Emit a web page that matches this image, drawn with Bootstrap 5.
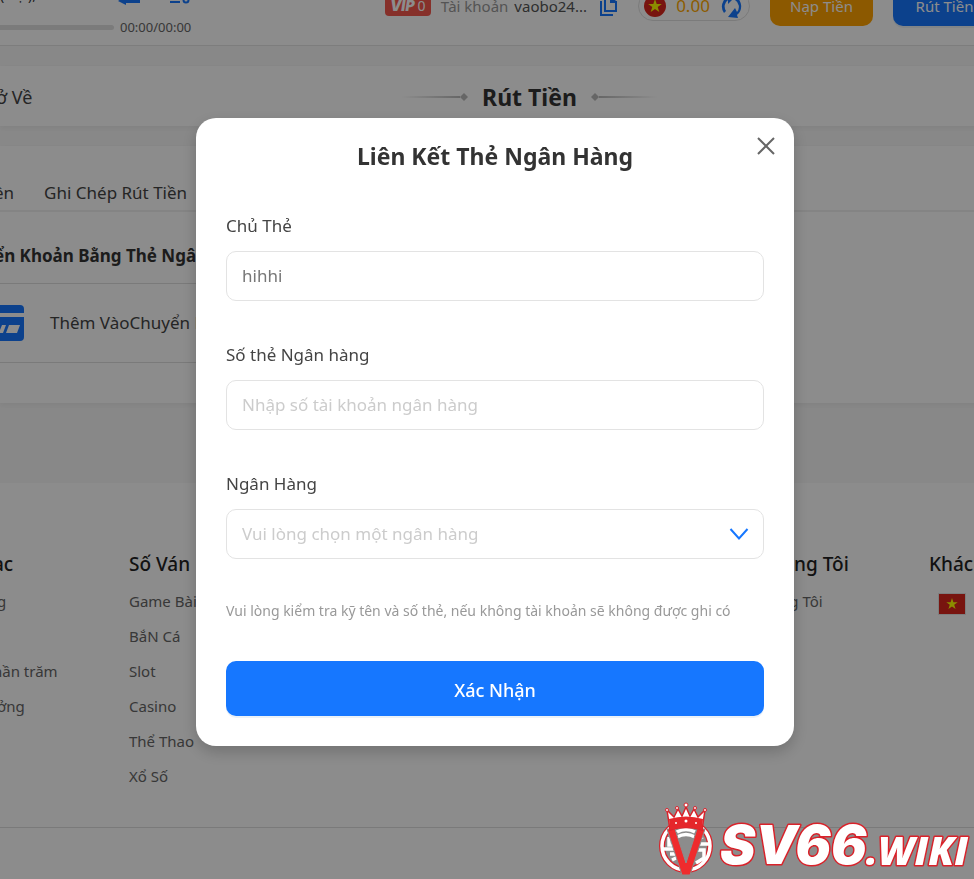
<!DOCTYPE html>
<html lang="vi">
<head>
<meta charset="utf-8">
<meta name="viewport" content="width=device-width, initial-scale=1">
<title>Rút Tiền</title>
<link href="https://cdn.jsdelivr.net/npm/bootstrap@5.3.0/dist/css/bootstrap.min.css" rel="stylesheet">
<style>
  body { font-family: "Noto Sans", "Open Sans", sans-serif; font-size: 17px; color: #333; background: #f8f8f8; overflow: hidden; }
  a { color: inherit; text-decoration: none; }
  .site { min-height: calc(100vh + 33px); margin: -33px -85px 0 0; white-space: nowrap; }
  .site-header { height: 79px; background: #fff; border-bottom: 1px solid #e4e4e4; padding-right: 63px; }
  .player { padding-top: 18px; font-size: 13px; line-height: 20px; color: #666; }
  .player-title { color: #333; font-size: 14px; gap: 40px; }
  .player-title span { width: 78px; }
  .player-track { width: 114px; height: 5px; background: #e0e0e0; border-radius: 0 4px 4px 0; margin-right: 6px; }
  .player-time { line-height: 24px; margin-top: 10px; }
  .tools { font-size: 15px; }
  .vip-tag { width: 46px; height: 20px; margin-right: 10px; border-radius: 4px; background: #f5584d; color: #fff; font: italic 900 14px/20px Inter, sans-serif; }
  .vip-tag span { font: 400 14px/20px "Noto Sans", sans-serif; }
  .user-label { color: #999; margin-right: 6px; }
  .user-name { margin-right: 13px; color: #555; }
  .wallet { width: 112px; height: 30px; margin: 0 20px; padding: 0 5px; border: 1px solid #e0e0e0; border-radius: 15px; color: #ffa800; font-size: 17px; }
  .cash-btn { width: 103px; height: 40px; border-radius: 10px; padding: 0; color: #fff; font-size: 15px; }
  .cash-in { background: #ffa200; margin-right: 20px; }
  .cash-out, .confirm-btn { background: #1677ff; box-shadow: 0 2px 0 rgba(5,90,160,.08); }
  .panel { background: #fff; box-shadow: 0 2px 6px rgba(0,0,0,.06); margin-top: 20px; }
  .title-bar { height: 60px; display: grid; grid-template-columns: 1fr auto 1fr; align-items: center; padding-top: 2px; }
  .title-bar > a { margin-left: -4px; font-size: 18px; }
  .title-bar h1 { font-size: 23px; line-height: 32px; font-weight: 700; margin: 0 14px; }
  .tabs-row { height: 66px; padding-top: 34px; border-bottom: 2px solid #f0f0f0; gap: 30px; margin-left: -6px; }
  .title-bar > a, .tabs-row a, .add-row { color: #444; }
  .method { width: 420px; padding-bottom: 40px; }
  .method h2 { font-size: 17px; line-height: 24px; font-weight: 700; margin: 0 0 0 -6px; padding: 32px 0 15px; border-bottom: 1px solid #dedede; }
  .add-row { height: 79px; gap: 26px; border-bottom: 1px solid #dedede; }
  .foot { margin-top: 80px; background: #fff; padding-top: 66px; color: #666; font-size: 15px; }
  .foot-cols { display: grid; grid-template-columns: 136px 602px 198px 1fr; height: 278px; margin-left: -7px; }
  .foot h3 { font-size: 19px; line-height: 30px; font-weight: 500; color: #222; margin: 0 0 5px; }
  .foot-cols li { height: 35px; line-height: 35px; }
  .foot-end { border-top: 1px solid #dedede; }
  .veil { background: rgba(0,0,0,.45); z-index: 10; padding: 0 0 16px 16px; }
  .bank-box { width: 598px; background: #fff; border-radius: 20px; padding: 22px 30px 30px; box-shadow: 0 6px 16px rgba(0,0,0,.2); position: relative; }
  .bank-box h2 { font-size: 23px; line-height: 32px; font-weight: 700; margin-bottom: 41px; }
  .shut { position: absolute; top: 14px; right: 14px; width: 28px; height: 28px; line-height: 0; }
  .field { margin-bottom: 41px; }
  .field label { display: block; line-height: 26px; margin-bottom: 12px; color: #444; }
  .field .form-control, .field .form-select { height: 50px; padding: 0 15px; font-size: 17px; border: 1px solid #e3e3e3; border-radius: 10px; color: #777; }
  .field .form-control::placeholder { color: #ccc; }
  .field .form-select { color: #ccc; background: #fff url("data:image/svg+xml,%3Csvg xmlns='http://www.w3.org/2000/svg' viewBox='0 0 20 14'%3E%3Cpath d='M1.500 2 10 11.500 18.500 2' fill='none' stroke='%231677ff' stroke-width='2'/%3E%3C/svg%3E") no-repeat right 14px center / 20px 14px; }
  .hint { font-size: 14px; line-height: 22px; color: #999; margin-bottom: 39px; white-space: nowrap; }
  .confirm-btn { height: 55px; border-radius: 10px; padding: 4px 0 0; color: #fff; font-size: 18px; font-weight: 500; }
  .brand { right: 0; bottom: 0; z-index: 20; }
  .brand text { fill: #fff; stroke: #d9222a; stroke-width: 3px; paint-order: stroke; stroke-linejoin: round; }
  .brand-main { font: italic 900 53px Inter, sans-serif; }
  .brand-tail { font: italic 800 39px "Open Sans", sans-serif; }
</style>
</head>
<body>
<div class="site d-flex flex-column">
  <header class="site-header d-flex justify-content-between">
    <div class="player">
      <div class="player-title d-flex"><span>( nại), 0 1/1</span>
        <svg width="74" height="20" viewBox="0 0 74 20"><path d="M4 6h18v12H8v2l-8-4 6-4z" fill="#1677ff"/><path d="M52 16h10v2H52zM54 10h8v2h-8z" fill="#1677ff"/><circle cx="68" cy="15" r="2.500" fill="none" stroke="#1677ff" stroke-width="2"/></svg>
      </div>
      <div class="player-time d-flex align-items-center"><div class="player-track"></div>00:00/00:00</div>
    </div>
    <div class="tools d-flex align-items-center">
      <div class="vip-tag text-center">VIP <span>0</span></div>
      <span class="user-label">Tài khoản</span><span class="user-name">vaobo24...</span>
      <svg width="18" height="20" viewBox="0 0 18 20"><path d="M5 1h6v5h5v9H5z" fill="none" stroke="#1677ff" stroke-width="2"/><path d="M11 0l6 6h-6zM0 5h2v13h11v2H0z" fill="#1677ff"/></svg>
      <div class="wallet d-flex align-items-center justify-content-between">
        <svg width="22" height="22" viewBox="0 0 22 22"><circle cx="11" cy="11" r="11" fill="#da251d"/><path d="m11 4 1.700 5h5.100l-4.100 3 1.600 5-4.300-3-4.300 3 1.600-5-4.100-3h5.100z" fill="#ff0"/></svg>
        <span>0.00</span>
        <svg width="24" height="24" viewBox="0 0 24 24" fill="#1677ff"><path d="M14 1A11.500 11.500 0 0 0 4 19l2-2A8 8 0 0 1 8 6v4l5-5z"/><path d="M16 3l-1 3a8 8 0 0 1 2 12l-2-4-7 9 10 1-1-3A11 11 0 0 0 16 3z"/></svg>
      </div>
      <button class="btn cash-btn cash-in" type="button">Nạp Tiền</button>
      <button class="btn cash-btn cash-out" type="button">Rút Tiền</button>
    </div>
  </header>

  <section class="panel title-bar">
    <a href="#">ở Về</a>
    <div class="d-flex align-items-center">
      <svg width="66" height="10" viewBox="0 0 66 10"><defs><linearGradient id="fl"><stop offset="0" stop-color="#bbb" stop-opacity="0"/><stop offset="1" stop-color="#bbb"/></linearGradient></defs><path d="M0 4h58v2H0z" fill="url(#fl)"/><path d="m62 1 4 4-4 4-4-4z" fill="#bbb"/></svg>
      <h1>Rút Tiền</h1>
      <svg width="66" height="10" viewBox="0 0 66 10"><defs><linearGradient id="fr"><stop offset="0" stop-color="#bbb"/><stop offset="1" stop-color="#bbb" stop-opacity="0"/></linearGradient></defs><path d="M8 4h58v2H8z" fill="url(#fr)"/><path d="m4 1 4 4-4 4-4-4z" fill="#bbb"/></svg>
    </div>
  </section>

  <section class="panel">
    <nav class="tabs-row d-flex"><a href="#">ền</a><a href="#">Ghi Chép Rút Tiền</a></nav>
    <div class="method">
      <h2>ển Khoản Bằng Thẻ Ngân Hàng</h2>
      <a class="add-row d-flex align-items-center" href="#">
        <svg width="24" height="36" viewBox="0 0 24 36"><path d="M0 0h20a4 4 0 0 1 4 4v4H0zM0 12h24v20a4 4 0 0 1-4 4H0z" fill="#1677ff"/><path d="M2 20h4l-3 8h-3v-3zM9 20h11l-3 8H6z" fill="#fff"/></svg>
        Thêm VàoChuyển Khoản
      </a>
    </div>
  </section>

  <footer class="foot flex-grow-1">
    <div class="foot-cols">
      <div><h3>ạc</h3><ul class="list-unstyled"><li class="ps-1">g</li><li></li><li>hần trăm</li><li class="ps-1">ởng</li></ul></div>
      <div><h3>Số Ván</h3><ul class="list-unstyled"><li>Game Bài</li><li>BắN Cá</li><li>Slot</li><li>Casino</li><li>Thể Thao</li><li>Xổ Số</li></ul></div>
      <div><h3>Về Chúng Tôi</h3><ul class="list-unstyled"><li>Về Chúng Tôi</li></ul></div>
      <div><h3>Khách</h3>
        <svg class="ms-2 mt-2" width="30" height="24" viewBox="0 0 30 24"><path d="M1 1h28v22H1z" fill="#e6e6e6"/><path d="M2 2h26v20H2z" fill="#da251d"/><path d="m15 6 1.400 4.200h4.300l-3.500 2.600 1.400 4.200-3.600-2.600-3.600 2.600 1.400-4.200-3.500-2.600h4.300z" fill="#ff0"/></svg>
      </div>
    </div>
    <div class="foot-end"></div>
  </footer>
</div>

<div class="veil position-fixed top-0 start-0 w-100 h-100 d-flex align-items-center justify-content-center">
  <form class="bank-box" role="dialog" aria-labelledby="box-title">
    <button class="shut btn p-0 border-0" type="button" aria-label="Đóng"><svg width="28" height="28" viewBox="0 0 28 28"><path d="m6 6 16 16M22 6 6 22" stroke="#666" stroke-width="2"/></svg></button>
    <h2 class="text-center" id="box-title">Liên Kết Thẻ Ngân Hàng</h2>
    <div class="field"><label for="owner">Chủ Thẻ</label><input class="form-control" id="owner" type="text" value="hihhi"></div>
    <div class="field"><label for="number">Số thẻ Ngân hàng</label><input class="form-control" id="number" type="text" placeholder="Nhập số tài khoản ngân hàng"></div>
    <div class="field"><label for="bank">Ngân Hàng</label><select class="form-select" id="bank"><option>Vui lòng chọn một ngân hàng</option></select></div>
    <p class="hint">Vui lòng kiểm tra kỹ tên và số thẻ, nếu không tài khoản sẽ không được ghi có</p>
    <button class="confirm-btn btn w-100" type="button">Xác Nhận</button>
  </form>
</div>

<svg class="brand position-fixed" width="320" height="80" viewBox="0 0 320 80" role="img" aria-label="SV66.WIKI">
  <circle cx="32" cy="47" r="24" fill="none" stroke="#d9222a" stroke-width="6"/>
  <g fill="none" stroke="#fff" stroke-width="3.500"><circle cx="32" cy="47" r="24"/><path d="M17 35a19 19 0 0 1 5-4M23 33q9-5 18 0M23 38q9-5 18 0M15 38v8h9M9 50h12M16 55h8M18 61l6-3M49 38l-8 2M55 45H43M44 51h6v8l-8 5"/></g>
  <path d="M13 30h8l11 34 11-34h8L36 76h-8z" fill="#ef2b2d" stroke="#8c8c8c" stroke-width="1"/>
  <path d="M13 11l7 7 4-8 4 7 4-9 4 9 4-7 4 8 7-7-3 20q-16-5-32 0z" fill="#fff" stroke="#d9222a" stroke-width="1.500"/>
  <path d="M15 20q17-5 34 0l-1 11q-16-5-32 0z" fill="#e5262b"/>
  <g fill="#fff" stroke="#d9222a"><circle cx="13" cy="11" r="1.500"/><circle cx="23" cy="9" r="1.500"/><circle cx="32" cy="6" r="2"/><circle cx="41" cy="9" r="1.500"/><circle cx="51" cy="11" r="1.500"/></g>
  <g fill="#fff"><circle cx="22" cy="24" r="1"/><circle cx="32" cy="22" r="1.500"/><circle cx="42" cy="24" r="1"/></g>
  <text class="brand-main" x="66" y="65">SV66</text>
  <text class="brand-tail" x="212" y="66">.WIKI</text>
</svg>
<script src="https://cdn.jsdelivr.net/npm/bootstrap@5.3.0/dist/js/bootstrap.bundle.min.js"></script>
</body>
</html>
